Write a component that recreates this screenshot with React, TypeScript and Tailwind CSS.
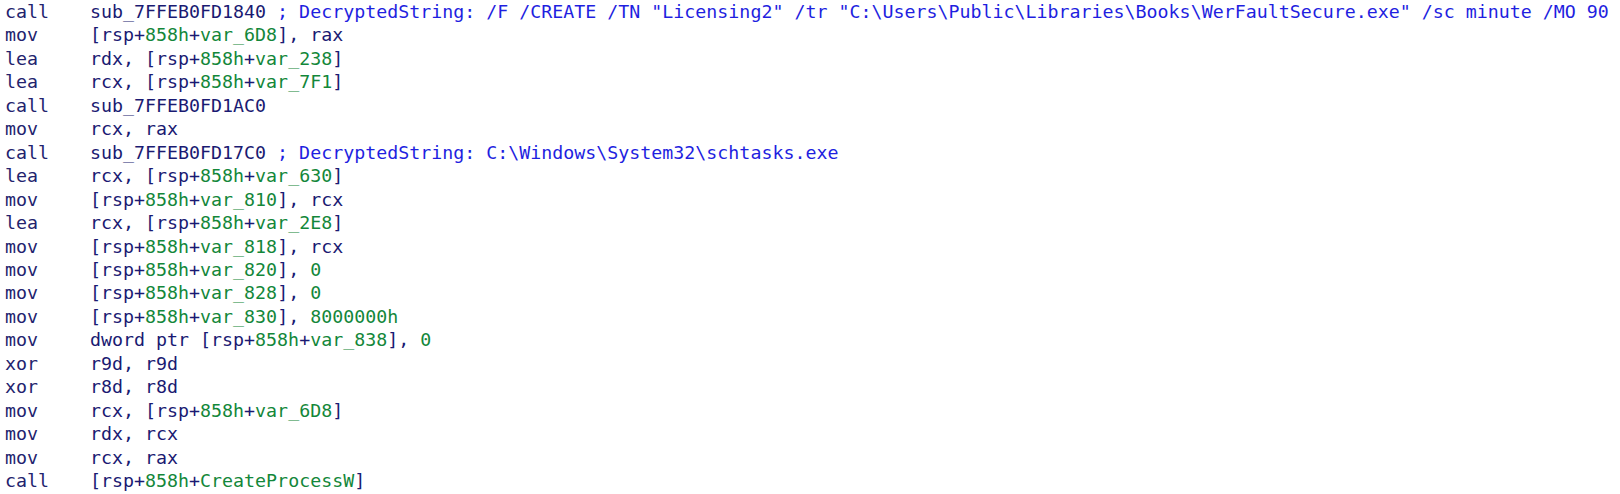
type Seg = [string, 'n' | 'g' | 'b']

interface Linha {
  op: string
  segs: Seg[]
}

const N = (t: string): Seg => [t, 'n']
const G = (t: string): Seg => [t, 'g']
const B = (t: string): Seg => [t, 'b']

// [rsp+858h+var_xxx] helper
const stk = (v: string): Seg[] => [N('[rsp+'), G('858h'), N('+'), G(v), N(']')]

const linhas: Linha[] = [
  {
    op: 'call',
    segs: [
      N('sub_7FFEB0FD1840 '),
      B('; DecryptedString: /F /CREATE /TN "Licensing2" /tr "C:\\Users\\Public\\Libraries\\Books\\WerFaultSecure.exe" /sc minute /MO 90'),
    ],
  },
  { op: 'mov', segs: [...stk('var_6D8'), N(', rax')] },
  { op: 'lea', segs: [N('rdx, '), ...stk('var_238')] },
  { op: 'lea', segs: [N('rcx, '), ...stk('var_7F1')] },
  { op: 'call', segs: [N('sub_7FFEB0FD1AC0')] },
  { op: 'mov', segs: [N('rcx, rax')] },
  {
    op: 'call',
    segs: [N('sub_7FFEB0FD17C0 '), B('; DecryptedString: C:\\Windows\\System32\\schtasks.exe')],
  },
  { op: 'lea', segs: [N('rcx, '), ...stk('var_630')] },
  { op: 'mov', segs: [...stk('var_810'), N(', rcx')] },
  { op: 'lea', segs: [N('rcx, '), ...stk('var_2E8')] },
  { op: 'mov', segs: [...stk('var_818'), N(', rcx')] },
  { op: 'mov', segs: [...stk('var_820'), N(', '), G('0')] },
  { op: 'mov', segs: [...stk('var_828'), N(', '), G('0')] },
  { op: 'mov', segs: [...stk('var_830'), N(', '), G('8000000h')] },
  { op: 'mov', segs: [N('dword ptr '), ...stk('var_838'), N(', '), G('0')] },
  { op: 'xor', segs: [N('r9d, r9d')] },
  { op: 'xor', segs: [N('r8d, r8d')] },
  { op: 'mov', segs: [N('rcx, '), ...stk('var_6D8')] },
  { op: 'mov', segs: [N('rdx, rcx')] },
  { op: 'mov', segs: [N('rcx, rax')] },
  { op: 'call', segs: [N('[rsp+'), G('858h'), N('+'), G('CreateProcessW'), N(']')] },
]

const cores = {
  n: 'text-[#1a1a72]',
  g: 'text-[#13873a]',
  b: 'text-[#1f1fe0]',
}

export default function App() {
  return (
    <div className="w-[1620px] h-[494px] bg-white overflow-hidden font-['DejaVu_Sans_Mono',monospace] text-[18.3px] leading-[23.45px]">
      {linhas.map((l, i) => (
        <div key={i} className="flex pl-[5px] whitespace-pre">
          <span className="w-[85px] shrink-0 text-[#23236e]">{l.op}</span>
          <span>
            {l.segs.map(([t, c], j) => (
              <span key={j} className={cores[c]}>
                {t}
              </span>
            ))}
          </span>
        </div>
      ))}
    </div>
  )
}
